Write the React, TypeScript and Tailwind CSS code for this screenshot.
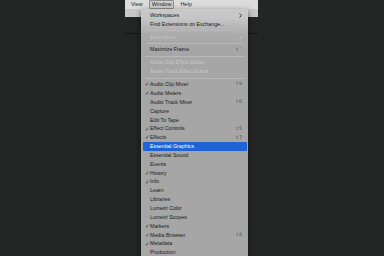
import React from "react";

type Item =
  | { sep: true }
  | {
      sep?: false;
      t: string;
      check?: boolean;
      disabled?: boolean;
      arrow?: boolean;
      mod?: string;
      key?: string;
      active?: boolean;
    };

const items: Item[] = [
  { t: "Workspaces", arrow: true },
  { t: "Find Extensions on Exchange..." },
  { sep: true },
  { t: "Extensions", disabled: true, arrow: true },
  { sep: true },
  { t: "Maximize Frame", mod: "⇧", key: "`" },
  { sep: true },
  { t: "Audio Clip Effect Editor", disabled: true },
  { t: "Audio Track Effect Editor", disabled: true },
  { sep: true },
  { t: "Audio Clip Mixer", check: true, mod: "⇧", key: "9" },
  { t: "Audio Meters", check: true },
  { t: "Audio Track Mixer", mod: "⇧", key: "6" },
  { t: "Capture" },
  { t: "Edit To Tape" },
  { t: "Effect Controls", check: true, mod: "⇧", key: "5" },
  { t: "Effects", check: true, mod: "⇧", key: "7" },
  { t: "Essential Graphics", active: true },
  { t: "Essential Sound" },
  { t: "Events" },
  { t: "History", check: true },
  { t: "Info", check: true },
  { t: "Learn" },
  { t: "Libraries" },
  { t: "Lumetri Color" },
  { t: "Lumetri Scopes" },
  { t: "Markers", check: true },
  { t: "Media Browser", check: true, mod: "⇧", key: "8" },
  { t: "Metadata", check: true },
  { t: "Production" },
];

export default function App() {
  return (
    <div className="relative h-[256px] w-[384px] overflow-hidden bg-[#242625] font-['Liberation_Sans',Arial,sans-serif]">
      {/* app window behind */}
      <div className="ml-[125px] w-[133px]">
        <div className="flex h-[9px] items-stretch gap-[3px] bg-[#dcdcdc] pl-[3px] text-[5.5px] leading-none text-[#1e1e1e]">
          <div className="flex items-center px-[3px]">View</div>
          <div className="flex items-center rounded-[1px] border border-[#8e8e8e] bg-[#cfcfcf] px-[2px]">Window</div>
          <div className="flex items-center px-[3px]">Help</div>
        </div>
        <div className="h-[8px] bg-[#c8c8c8]" />
        <div className="mt-[16px] h-px bg-[#161616]" />
      </div>

      {/* dropdown menu */}
      <div className="absolute left-[141px] top-[9px] h-[260px] w-[107px] bg-[linear-gradient(to_bottom,#c9c9c9_0px,#c6c6c6_9px,#aaaaaa_26px,#a6a6a6_40px)] pt-[2px] shadow-[0_2px_6px_rgba(0,0,0,0.55)]">
        {items.map((it, i) =>
          it.sep ? (
            <div key={i} className="py-[1.55px]">
              <div className="mx-[4px] h-px bg-[#b9b9b9]" />
            </div>
          ) : (
            <div
              key={i}
              className={`relative mx-[1.5px] flex h-[8.85px] items-center rounded-[1px] pl-[7.5px] pr-[4.5px] text-[5.3px] leading-none ${
                it.active
                  ? "bg-[#1f63d4] text-white"
                  : it.disabled
                  ? "text-[#c6c6c6]"
                  : "text-[#1a1a1a]"
              }`}
            >
              {it.check && (
                <span className="absolute left-[2.5px] top-[1.9px] text-[5.5px] leading-none font-['DejaVu_Sans',sans-serif]">
                  ✓
                </span>
              )}
              <span className="flex-1 whitespace-nowrap">{it.t}</span>
              {it.arrow && (
                <svg width="3" height="5" viewBox="0 0 3 5" className="mr-[0.5px]">
                  <path
                    d="M0.5 0.5 L2.5 2.5 L0.5 4.5"
                    fill="none"
                    stroke={it.disabled ? "#c6c6c6" : "#1a1a1a"}
                    strokeWidth="0.8"
                  />
                </svg>
              )}
              {it.mod && (
                <span className="flex items-center text-[#4a4a4a] font-['DejaVu_Sans',sans-serif] text-[4.8px]">
                  <span className="w-[4px]">{it.mod}</span>
                  <span className="w-[3px] text-right">{it.key}</span>
                </span>
              )}
            </div>
          )
        )}
      </div>
    </div>
  );
}
